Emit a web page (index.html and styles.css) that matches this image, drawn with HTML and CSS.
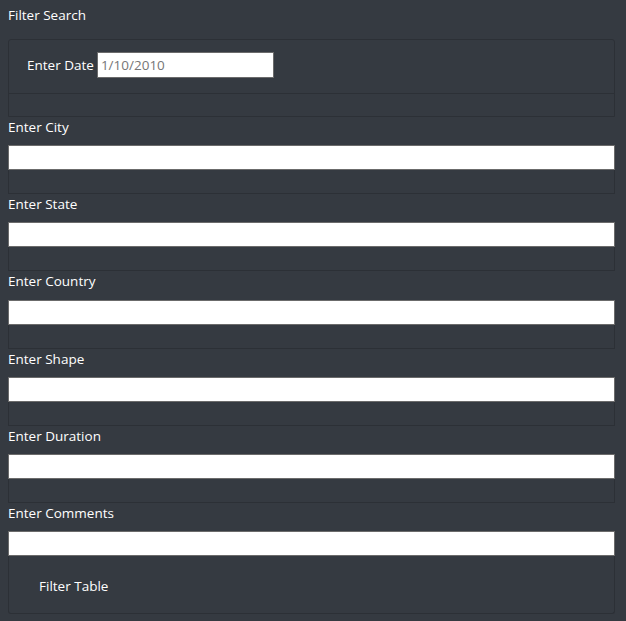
FILE: index.html
```html
<!DOCTYPE html>
<html>
<head>
<meta charset="utf-8">
<link rel="stylesheet" href="styles.css">
</head>
<body>
<div class="page">
  <div class="title">Filter Search</div>
  <div class="panel">
    <div class="date-row">
      <label class="date-label">Enter Date</label>
      <input class="date-input" type="text" placeholder="1/10/2010">
    </div>
    <div class="empty-row"></div>
  </div>

  <div class="field">
    <label class="field-label">Enter City</label>
    <div class="field-box"><input class="field-input" type="text"></div>
  </div>
  <div class="field">
    <label class="field-label">Enter State</label>
    <div class="field-box"><input class="field-input" type="text"></div>
  </div>
  <div class="field">
    <label class="field-label">Enter Country</label>
    <div class="field-box"><input class="field-input" type="text"></div>
  </div>
  <div class="field">
    <label class="field-label">Enter Shape</label>
    <div class="field-box"><input class="field-input" type="text"></div>
  </div>
  <div class="field">
    <label class="field-label">Enter Duration</label>
    <div class="field-box"><input class="field-input" type="text"></div>
  </div>
  <div class="field">
    <label class="field-label">Enter Comments</label>
    <div class="field-box last">
      <input class="field-input" type="text">
      <div class="button-row"><button class="filter-btn" type="button">Filter Table</button></div>
    </div>
  </div>
</div>
</body>
</html>
```

FILE: styles.css
```css
html, body {
  margin: 0;
  padding: 0;
  background: #353a41;
  color: #ffffff;
  font-family: "Open Sans", "Noto Sans", sans-serif;
  font-size: 13.5px;
}

.page {
  width: 607px;
  padding: 5px 11px 0 8px;
}

.title {
  height: 20px;
  line-height: 20px;
  margin-bottom: 14px;
}

.panel {
  border: 1px solid #2c3036;
  border-radius: 3px 3px 0 0;
}

.date-row {
  display: flex;
  align-items: center;
  gap: 3px;
  padding: 12px 0 15px 18px;
  border-bottom: 1px solid #2c3036;
}

.date-label {
  line-height: 20px;
}

.date-input {
  box-sizing: border-box;
  width: 177px;
  height: 26px;
  margin: 0;
  padding: 0 3px;
  border: 1px solid #6b6b6b;
  background: #fff;
  font-family: inherit;
  font-size: 13.5px;
  color: #333;
}

.date-input::placeholder {
  color: #767676;
}

.empty-row {
  height: 22px;
}

.field-label {
  display: block;
  line-height: 20.2px;
  margin-bottom: 8px;
}

.field-box {
  border: 1px solid #2c3036;
  border-top: none;
  padding-bottom: 23px;
}

.field-input {
  display: block;
  box-sizing: border-box;
  width: calc(100% + 2px);
  height: 25px;
  margin: 0 -1px;
  padding: 0 4px;
  border: 1px solid #6b6b6b;
  background: #fff;
  font-family: inherit;
  font-size: 13.5px;
}

.field-box.last {
  padding-bottom: 0;
  border-radius: 0 0 3px 3px;
}

.button-row {
  height: 57px;
  display: flex;
  align-items: center;
  padding-left: 30px;
}

.filter-btn {
  background: none;
  border: none;
  padding: 0;
  color: #fff;
  font-family: inherit;
  font-size: 13.5px;
  line-height: 20px;
  margin-top: 2px;
}
```
